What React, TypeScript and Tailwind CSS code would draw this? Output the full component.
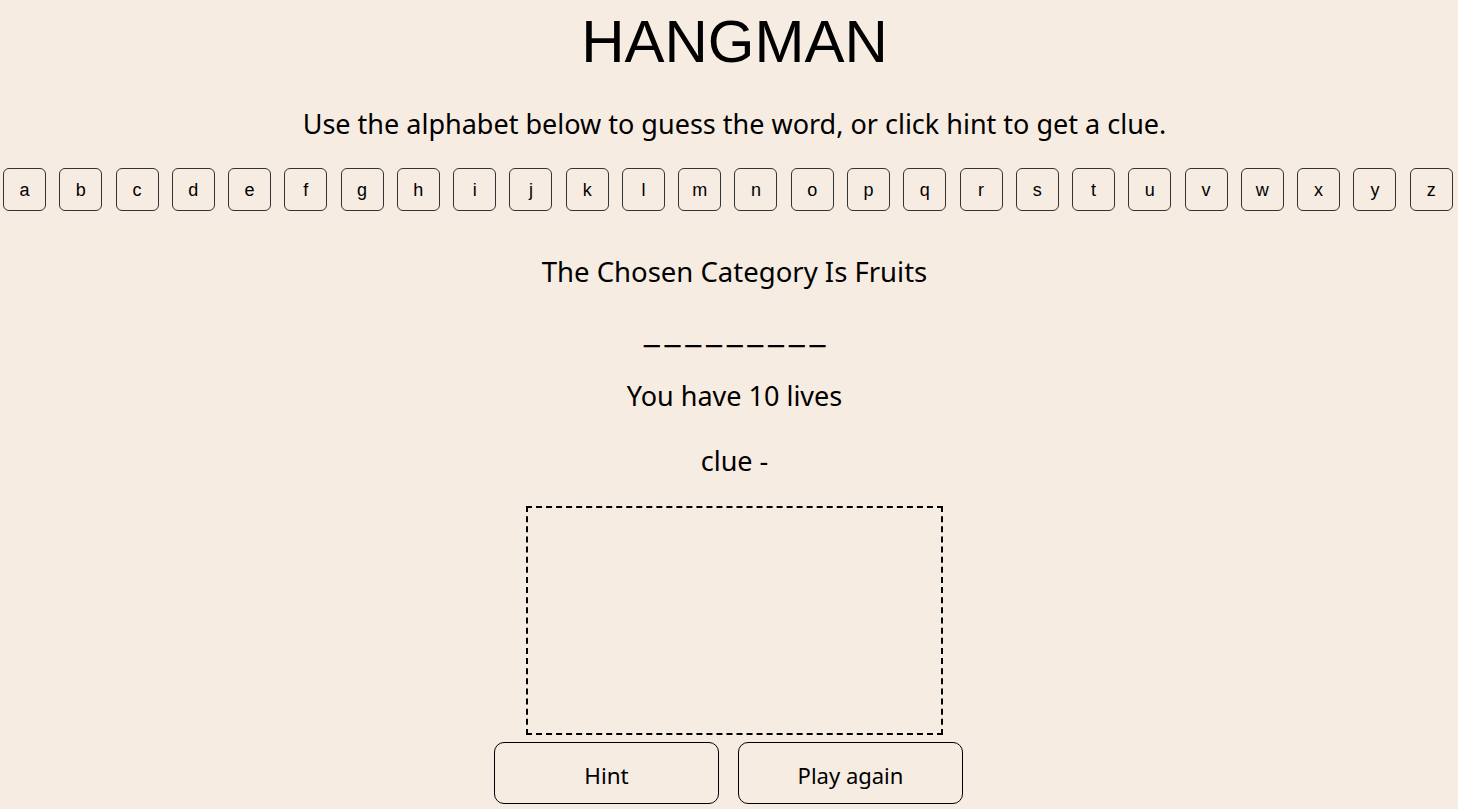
import React from "react";

const letters = "abcdefghijklmnopqrstuvwxyz".split("");

export default function App() {
  return (
    <div className="min-h-screen w-full bg-[#f7ece2] text-black flex flex-col items-center">
      <div className="flex flex-col items-center pl-[11px]">
        <h1 className="pt-[7px] h-[77px] text-[60px] leading-[70px] font-normal font-['Liberation_Sans',Arial,sans-serif]">
          HANGMAN
        </h1>
        <p className="mt-[29px] h-[36px] text-[27px] leading-[36px] font-['Noto_Sans',sans-serif] whitespace-nowrap">
          Use the alphabet below to guess the word, or click hint to get a clue.
        </p>
      </div>

      <div className="mt-[26px] w-full pl-[3px] pr-[5px] flex justify-between">
        {letters.map((l) => (
          <button
            key={l}
            className="w-[43px] h-[43px] rounded-[6px] border border-[#333] bg-transparent flex items-center justify-center text-[18px] leading-none font-['Liberation_Sans',Arial,sans-serif] text-black"
          >
            {l}
          </button>
        ))}
      </div>

      <div className="flex flex-col items-center pl-[11px] font-['Noto_Sans',sans-serif]">
        <p className="mt-[43px] h-[36px] text-[27.5px] leading-[36px] whitespace-nowrap">
          The Chosen Category Is Fruits
        </p>
        <p className="mt-[31px] h-[30px] pl-[5px] text-[26.7px] leading-[30px] tracking-[4.7px] font-bold font-['Liberation_Mono',monospace] whitespace-nowrap [text-shadow:0_1px_0_#000]">
          _________
        </p>
        <p className="mt-[27px] h-[36px] text-[27px] leading-[36px] whitespace-nowrap">You have 10 lives</p>
        <p className="mt-[29px] h-[36px] text-[27px] leading-[36px] whitespace-nowrap">clue -</p>
        <div className="mt-[27px] w-[417px] h-[229px] border-2 border-dashed border-black" />
      </div>

      <div className="mt-[7px] mr-[1px] flex gap-[19px] font-['Noto_Sans',sans-serif]">
        <button className="w-[225px] h-[62px] rounded-[10px] border border-black bg-transparent pt-[5px] text-[22.5px] text-black flex items-center justify-center">
          Hint
        </button>
        <button className="w-[225px] h-[62px] rounded-[10px] border border-black bg-transparent pt-[5px] text-[22px] text-black flex items-center justify-center">
          Play again
        </button>
      </div>
    </div>
  );
}
